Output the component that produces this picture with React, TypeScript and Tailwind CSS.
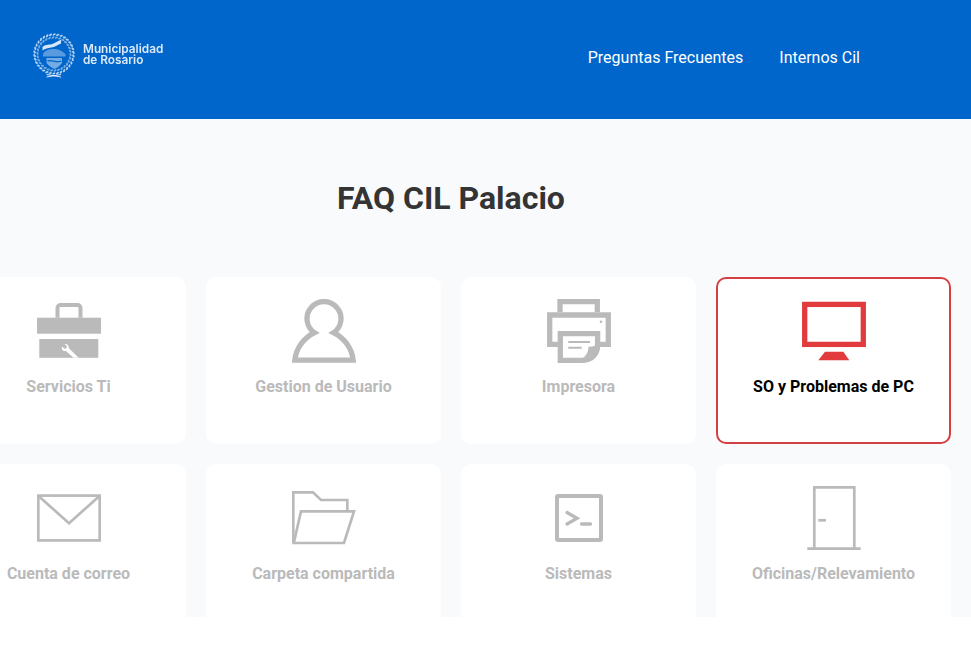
import type { ReactNode } from 'react';

const GRAY = '#bababa';
const RED = '#e23b3d';

function IconSvg({ children }: { children: ReactNode }) {
  return (
    <svg viewBox="0 0 64 64" className="block h-16 w-16" fill="none">
      {children}
    </svg>
  );
}

function ToolboxIcon() {
  return (
    <IconSvg>
      <path d="M20.500 18.700V9a3 3 0 0 1 3-3h17a3 3 0 0 1 3 3v9.700" stroke={GRAY} strokeWidth="4" />
      <rect x="0" y="18.700" width="64" height="16" fill={GRAY} />
      <rect x="2.300" y="40" width="59" height="18.800" fill={GRAY} />
      <path d="M25 47.500l2.600 2.200 1.800-.4.500-2-2.400-2.300c2.400-.6 4.700 1.500 4.400 4.200l9.800 9.500h-5.200l-7.600-6.600c-2.800.6-4.900-1.900-3.900-4.600z" fill="#fff" />
    </IconSvg>
  );
}

function UserIcon() {
  return (
    <IconSvg>
      <path
        d="M2.800 61.200H61.200C60 49 52 38.800 41.500 33.700A17 17 0 1 0 22.500 33.700C12 38.800 4 49 2.800 61.200Z"
        stroke={GRAY}
        strokeWidth="5.300"
      />
    </IconSvg>
  );
}

function PrinterIcon() {
  return (
    <IconSvg>
      <path d="M13 13.300V2.700H50.300V13.300" stroke={GRAY} strokeWidth="5.300" />
      <path d="M11 45.300H2.700V16H61.300V45.300H51" stroke={GRAY} strokeWidth="5.300" />
      <circle cx="54" cy="22.700" r="1.300" fill={GRAY} />
      <path d="M13.300 34.700H50.600V46C50.600 55 45 61.300 36 61.300H13.300Z" fill="#fff" stroke={GRAY} strokeWidth="5.300" />
      <path d="M49 46c-2.500 1.500-5 2-7.500 1.500C41.500 52 40 56 36 59c7 0 13-5 13-13z" fill={GRAY} />
      <path d="M21.300 43H43M21.300 48.700H34.700" stroke={GRAY} strokeWidth="2" />
    </IconSvg>
  );
}

function MonitorIcon() {
  return (
    <IconSvg>
      <rect x="2.700" y="5.400" width="58.600" height="40" stroke={RED} strokeWidth="5.300" />
      <path d="M23 52.700H41.300L47.300 61.300H16.300Z" fill={RED} />
    </IconSvg>
  );
}

function MailIcon() {
  return (
    <IconSvg>
      <rect x="1.300" y="9.600" width="61.400" height="44.800" stroke={GRAY} strokeWidth="2.700" />
      <path d="M1.800 10.200L32 37.300L62.200 10.200" stroke={GRAY} strokeWidth="2.700" />
    </IconSvg>
  );
}

function FolderIcon() {
  return (
    <IconSvg>
      <path d="M1.300 57V6.300H21L29 14H55.300V25" stroke={GRAY} strokeWidth="2.700" />
      <path d="M1.800 57L9 25.300H62L52 57Z" stroke={GRAY} strokeWidth="2.700" />
    </IconSvg>
  );
}

function TerminalIcon() {
  return (
    <IconSvg>
      <rect x="10" y="10" width="44" height="44" rx="1" stroke={GRAY} strokeWidth="4" />
      <path d="M20 26.500L30 32.300L20 38" stroke={GRAY} strokeWidth="3.300" strokeLinecap="round" />
      <path d="M34.500 38H43.500" stroke={GRAY} strokeWidth="3.300" strokeLinecap="round" />
    </IconSvg>
  );
}

function DoorIcon() {
  return (
    <IconSvg>
      <path d="M12.300 62V1.300H52.300V62" stroke={GRAY} strokeWidth="2.700" />
      <path d="M5.300 62.700H58.700" stroke={GRAY} strokeWidth="2.700" />
      <path d="M16.300 34.300H24" stroke={GRAY} strokeWidth="2.700" />
    </IconSvg>
  );
}

// round municipal crest, small enough that only the overall shape reads
function Crest() {
  const outer = Array.from({ length: 34 }, (_, i) => (i / 34) * Math.PI * 2 + 0.1);
  const inner = Array.from({ length: 30 }, (_, i) => (i / 30) * Math.PI * 2 + 0.25);
  const leaf = (a: number, r: number, key: string, opacity: number) => {
    const x = 21 + Math.cos(a) * r;
    const y = 21 + Math.sin(a) * r;
    return (
      <ellipse
        key={key}
        cx={x}
        cy={y}
        rx="1.700"
        ry="1"
        fill="#fff"
        opacity={opacity}
        transform={`rotate(${(a * 180) / Math.PI + 60} ${x} ${y})`}
      />
    );
  };
  return (
    <svg viewBox="0 0 42 45" className="h-[45px] w-[42px] shrink-0 blur-[0.3px]" fill="none">
      {outer.map((a, i) => leaf(a, 19.500, `o${i}`, 0.7))}
      {inner.map((a, i) => leaf(a, 16.500, `i${i}`, 0.45))}
      <path d="M9.500 14C13 10.500 17 12.500 20.500 10.500C23 9 26 7.500 28 7V10.500C24 12 22 14 18 14.500C15 15 12 15.500 9.500 17.500Z" fill="#d7e7f8" />
      <path d="M10 20.500C13 16.500 18 16 21 16C25 16 30 18 32.500 21.500V23.500H10Z" fill="#fff" opacity="0.35" />
      <path d="M13.500 25H29V30C27 33 24 35 21.500 36C19 35 15.500 33 13.500 30Z" fill="#fff" opacity="0.45" />
      <path d="M14.500 28C18 26 24 30.500 28.500 28" stroke="#0066cc" strokeWidth="1.200" />
      <path d="M13.500 41.500L28 44M28 41.500L13.500 44" stroke="#fff" strokeWidth="1" opacity="0.85" />
    </svg>
  );
}

const cards = [
  { label: 'Servicios Ti', icon: <ToolboxIcon /> },
  { label: 'Gestion de Usuario', icon: <UserIcon /> },
  { label: 'Impresora', icon: <PrinterIcon /> },
  { label: 'SO y Problemas de PC', icon: <MonitorIcon />, active: true },
  { label: 'Cuenta de correo', icon: <MailIcon /> },
  { label: 'Carpeta compartida', icon: <FolderIcon /> },
  { label: 'Sistemas', icon: <TerminalIcon /> },
  { label: 'Oficinas/Relevamiento', icon: <DoorIcon /> },
];

export default function App() {
  return (
    <div className="min-h-[668px] overflow-hidden bg-white font-['Roboto',sans-serif]">
      {/* Header */}
      <header className="flex h-[119px] items-center bg-[#0066cc] pl-[33px] pr-[111px] text-white">
        <div className="flex items-center gap-[8px] pb-[8px]">
          <Crest />
          <div className="pb-[1px] font-['Inter',sans-serif] text-[11.800px] leading-[11px] font-semibold text-[#dbe9f8] blur-[0.3px]">
            Municipalidad
            <br />
            de Rosario
          </div>
        </div>
        <nav className="ml-auto flex gap-9 pb-[4px] text-base">
          <a>Preguntas Frecuentes</a>
          <a>Internos Cil</a>
        </nav>
      </header>

      {/* Categories */}
      <main className="h-[498px] overflow-hidden bg-[#f9fafc]">
        <div className="ml-[-49px] w-[1000px]">
          <h1 className="pt-[58px] pb-[58px] text-center text-[32px] leading-[42px] font-bold text-[#343434]">
            FAQ CIL Palacio
          </h1>
          <div className="grid grid-cols-4 gap-5">
            {cards.map((card) => (
              <div
                key={card.label}
                className={`flex h-[167px] flex-col items-center rounded-[10px] border-2 bg-white pt-5 ${
                  card.active ? 'border-[#d43f42]' : 'border-white'
                }`}
              >
                {card.icon}
                <p
                  className={`mt-3 text-base leading-6 font-bold ${
                    card.active ? 'text-black' : 'text-[#bababa]'
                  }`}
                >
                  {card.label}
                </p>
              </div>
            ))}
          </div>
        </div>
      </main>
    </div>
  );
}
